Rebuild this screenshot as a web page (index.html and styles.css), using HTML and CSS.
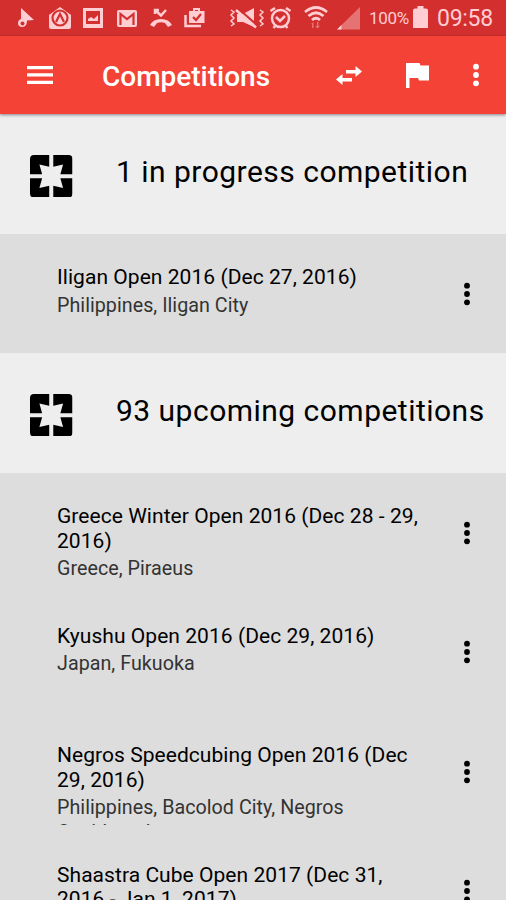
FILE: index.html
```
<!DOCTYPE html>
<html lang="en">
<head>
  <meta charset="UTF-8">
  <meta name="viewport" content="width=device-width, initial-scale=1.0">
  <title>Competitions</title>
  <link rel="stylesheet" href="styles.css">
</head>
<body>
  <!-- shared icons -->
  <svg class="defs">
    <symbol id="more" viewBox="0 0 8 24">
      <circle cx="4" cy="3.700" r="2.900"/><circle cx="4" cy="12" r="2.900"/><circle cx="4" cy="20.300" r="2.900"/>
    </symbol>
    <symbol id="cube" viewBox="0 0 42 42">
      <path d="M4 0H19V11.500L9.300 9.300L12 19H0V4Q0 0 4 0Z"/>
      <path d="M38 0H23V11.500L32.700 9.300L30 19H42V4Q42 0 38 0Z"/>
      <path d="M4 42H19V30.500L9.300 32.700L12 23H0V38Q0 42 4 42Z"/>
      <path d="M38 42H23V30.500L32.700 32.700L30 23H42V38Q42 42 38 42Z"/>
    </symbol>
  </svg>

  <div class="status">
    <svg class="status-icons" viewBox="0 0 364 36">
      <path d="M21 8L34 20L27 20.500Q27 27 22.500 27Q18 27 18 23Q18 20 21 19Z"/>
      <circle class="hole" cx="22.500" cy="23.500" r="2"/>
      <path d="M49 15L60 7L71 15V27Q71 29 69 29H51Q49 29 49 27Z"/>
      <circle class="cut" cx="60" cy="18" r="7.500"/>
      <path class="cut" d="M56 22L60 14L64 22"/>
      <path fill-rule="evenodd" d="M83 8H103V28H83ZM86 11V24H100V11Z"/>
      <path d="M88 21V19L91 17L94 19L98 15V21Z"/>
      <rect x="117" y="10" width="20" height="17" rx="2"/>
      <path class="cut" d="M120.500 25V14L127 19L133.500 14V25"/>
      <path d="M150 25Q153 19 161 19Q169 19 172 25L168 27L165 23Q161 21.500 157 23L154 27Z"/>
      <path class="call" d="M155 14V10H159M155.500 10.500L161 15.500L166 10"/>
      <path d="M189 11H193V8H200V11H204.500V23H189ZM195 10V11H198V10Z" fill-rule="evenodd"/>
      <path class="line" d="M185.500 15V26H201"/>
      <path class="check" d="M193 17L196 20L201 14"/>
      <path class="zigzag" d="M231 10L234 12L231 15L234 18L231 21L234 24L231 26M260 10L263 12L260 15L263 18L260 21L263 24L260 26"/>
      <path d="M237 14H243L254 8V27L243 22H237Z"/>
      <path class="cut" d="M238 8.500L258 26"/>
      <path class="line" d="M236 10L256 27.500"/>
      <circle class="clock" cx="280.500" cy="18.500" r="8.500"/>
      <path class="line" d="M270.500 11L275 8M286 8L290.500 11M273.500 28L276 25M287.500 28L285 25M276 17L280 21L285 16"/>
      <path class="wifi" d="M305 12Q316 3 327 12M308.500 16Q316 9.500 323.500 16M312 20Q316 16.500 320 20"/>
      <path class="dim" d="M311 24L313.500 22V28H312V24ZM317 22H318.500V26H320L317.500 28.500L315 26H317Z"/>
      <path class="dim" d="M360 7V29.500H337Z"/>
      <path d="M341.500 25V29.500H337Z"/>
    </svg>
    <span class="percent">100%</span>
    <svg class="battery" viewBox="0 0 15 22">
      <path d="M4.500 0H10.500V2.500H13Q15 2.500 15 4.500V22H0V4.500Q0 2.500 2 2.500H4.500Z"/>
    </svg>
    <span class="time">09:58</span>
  </div>

  <header class="toolbar">
    <svg class="menu" viewBox="0 0 26 18"><path d="M0 0H26V3.300H0ZM0 7.300H26V10.600H0ZM0 14.700H26V18H0Z"/></svg>
    <h1>Competitions</h1>
    <svg class="swap" viewBox="0 0 26 19">
      <path d="M10 4H19.500V0L26 5.500L19.500 11V7.500H10ZM16 15.500H6.500V19L0 13.500L6.500 8V12H16Z"/>
    </svg>
    <svg class="flag" viewBox="0 0 23 25"><path d="M0 0H13.500L14.500 2.500H23V17.500H13L12 15H3.500V25H0Z"/></svg>
    <svg class="more"><use href="#more"/></svg>
  </header>

  <main>
    <div class="group">
      <svg class="cube"><use href="#cube"/></svg>
      <h2>1 in progress competition</h2>
    </div>
    <div class="item">
      <div class="text">
        <h3>Iligan Open 2016 (Dec 27, 2016)</h3>
        <p>Philippines, Iligan City</p>
      </div>
      <svg class="more"><use href="#more"/></svg>
    </div>

    <div class="group">
      <svg class="cube"><use href="#cube"/></svg>
      <h2>93 upcoming competitions</h2>
    </div>
    <div class="item">
      <div class="text">
        <h3>Greece Winter Open 2016 (Dec 28 - 29,<br>2016)</h3>
        <p>Greece, Piraeus</p>
      </div>
      <svg class="more"><use href="#more"/></svg>
    </div>
    <div class="item">
      <div class="text">
        <h3>Kyushu Open 2016 (Dec 29, 2016)</h3>
        <p>Japan, Fukuoka</p>
      </div>
      <svg class="more"><use href="#more"/></svg>
    </div>
    <div class="item">
      <div class="text">
        <h3>Negros Speedcubing Open 2016 (Dec<br>29, 2016)</h3>
        <p>Philippines, Bacolod City, Negros<br>Occidental</p>
      </div>
      <svg class="more"><use href="#more"/></svg>
    </div>
    <div class="item">
      <div class="text">
        <h3>Shaastra Cube Open 2017 (Dec 31,<br>2016 - Jan 1, 2017)</h3>
      </div>
      <svg class="more"><use href="#more"/></svg>
    </div>
  </main>
</body>
</html>
```
FILE: styles.css
```
* {
  box-sizing: border-box;
}
body {
  margin: 0;
  height: 900px;
  overflow: hidden;
  display: flex;
  flex-direction: column;
  font-family: Roboto, sans-serif;
  background-color: #dddddd;
}
h1, h2, h3, p {
  margin: 0;
  font-weight: 400;
  white-space: nowrap;
}
svg {
  flex: none;
}
.defs {
  display: none;
}
main {
  flex: 1;
  min-height: 0;
  overflow: hidden;
}
.status {
  display: flex;
  align-items: center;
  flex: none;
  height: 36px;
  background-color: #d32f2f;
  color: #ffcdd2;
  fill: #ffcdd2;
}
.status-icons {
  width: 364px;
  height: 36px;
}
.status-icons .hole {
  fill: #d32f2f;
}
.status-icons .cut,
.status-icons .check {
  fill: none;
  stroke: #d32f2f;
  stroke-width: 2.2;
}
.status-icons .line,
.status-icons .call,
.status-icons .wifi,
.status-icons .clock,
.status-icons .zigzag {
  fill: none;
  stroke: #ffcdd2;
  stroke-width: 2.5;
}
.status-icons .wifi {
  stroke-width: 2.8;
}
.status-icons .zigzag {
  stroke-width: 1.5;
}
.status-icons .dim {
  fill: #e57373;
}
.percent {
  width: 46px;
  margin-left: 5px;
  font-size: 17px;
  letter-spacing: -0.3px;
}
.battery {
  width: 15px;
  height: 22px;
  margin: -2px 0 0 -2px;
}
.time {
  margin: 1px 0 0 9px;
  font-size: 23px;
  letter-spacing: -0.3px;
}
.toolbar {
  display: flex;
  align-items: center;
  flex: none;
  height: 78px;
  padding-left: 27px;
  background-color: #f44336;
  box-shadow: 0 1px 3px rgba(0, 0, 0, 0.45);
  z-index: 1;
  color: #ffffff;
  fill: #ffffff;
}
.menu {
  width: 26px;
  height: 18px;
}
.toolbar h1 {
  width: 234px;
  margin: 3px 0 0 49px;
  font-size: 28px;
  font-weight: 500;
}
.swap {
  width: 26px;
  height: 19px;
}
.flag {
  width: 23px;
  height: 25px;
  margin-left: 44px;
}
.more {
  width: 8px;
  height: 24px;
}
.toolbar .more {
  margin-left: 43px;
}
.group,
.item {
  display: flex;
  height: 119.5px;
}
.group {
  align-items: center;
  padding: 4px 0 0 30px;
  background-color: #eeeeee;
}
.cube {
  width: 42.5px;
  height: 42.5px;
}
.group h2 {
  margin: -8px 0 0 43.5px;
  font-size: 30px;
  letter-spacing: 0.48px;
}
.item {
  padding-left: 57px;
  background-color: #dddddd;
}
.text {
  width: 406px;
  height: 83px;
  margin-top: 30px;
  overflow: hidden;
}
.text h3 {
  font-size: 21px;
  line-height: 24.600px;
  letter-spacing: 0.05px;
  padding-top: 1.5px;
}
.text p {
  margin-top: 4px;
  font-size: 19.700px;
  line-height: 24.500px;
  letter-spacing: 0.03px;
  color: #333333;
}
.item .more {
  margin-top: 48px;
}
```
